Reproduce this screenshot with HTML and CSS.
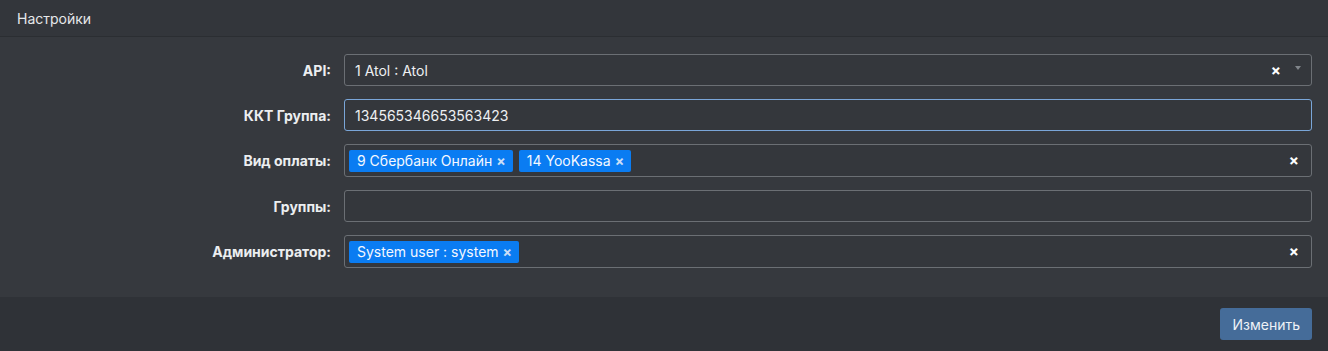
FILE: index.html
```html
<!DOCTYPE html>
<html lang="ru">
<head>
    <meta charset="UTF-8">
    <meta name="viewport" content="width=device-width, initial-scale=1.0">
    <title>Настройки</title>
    <link rel="stylesheet" href="styles.css">
</head>
<body>
    <div class="card">
        <div class="card-header">Настройки</div>

        <div class="card-body">
            <div class="form-row">
                <label class="form-label">API:</label>
                <div class="select single">
                    <span class="select-value">1 Atol : Atol</span>
                    <span class="select-clear">&times;</span>
                    <span class="select-arrow"></span>
                </div>
            </div>

            <div class="form-row">
                <label class="form-label">ККТ Группа:</label>
                <input class="form-input focused" type="text" value="134565346653563423">
            </div>

            <div class="form-row">
                <label class="form-label">Вид оплаты:</label>
                <div class="select multi">
                    <div class="tags">
                        <span class="tag">9 Сбербанк Онлайн <span class="tag-remove">&times;</span></span>
                        <span class="tag">14 YooKassa <span class="tag-remove">&times;</span></span>
                    </div>
                    <span class="select-clear">&times;</span>
                </div>
            </div>

            <div class="form-row">
                <label class="form-label">Группы:</label>
                <input class="form-input" type="text" value="">
            </div>

            <div class="form-row">
                <label class="form-label">Администратор:</label>
                <div class="select multi">
                    <div class="tags">
                        <span class="tag">System user : system <span class="tag-remove">&times;</span></span>
                    </div>
                    <span class="select-clear">&times;</span>
                </div>
            </div>
        </div>

        <div class="card-footer">
            <button class="btn-primary">Изменить</button>
        </div>
    </div>
</body>
</html>
```

FILE: styles.css
```css
* {
    box-sizing: border-box;
    margin: 0;
    padding: 0;
}

body {
    background-color: #2e3136;
    font-family: Inter, 'Liberation Sans', sans-serif;
    color: #e4e6e8;
    width: 1328px;
    height: 351px;
    overflow: hidden;
}

.card {
    background-color: #36393e;
    height: 351px;
    display: flex;
    flex-direction: column;
}

.card-header {
    height: 37px;
    padding: 0 17px;
    display: flex;
    align-items: center;
    font-size: 14px;
    color: #e6e8ea;
    background-color: #33363b;
    border-bottom: 1px solid #2b2e32;
}

.card-body {
    padding: 17px 16px 16px 0;
    display: flex;
    flex-direction: column;
    gap: 13px;
}

.form-row {
    display: grid;
    grid-template-columns: 331px 1fr;
    column-gap: 13px;
    align-items: center;
}

.form-label {
    text-align: right;
    font-size: 14px;
    font-weight: 700;
    color: #eceef0;
}

.form-input,
.select {
    height: 32px;
    width: 100%;
    border: 1px solid #6b6f74;
    border-radius: 3px;
    background-color: #34373c;
    color: #eef0f2;
    font-family: inherit;
    font-size: 14px;
}

.form-input {
    padding: 0 10px;
    outline: none;
}

.form-input.focused {
    border-color: #7aa6d8;
}

.select {
    display: flex;
    align-items: center;
    padding: 0 10px;
}

.select.multi {
    height: 33px;
    padding: 0 12px 0 4px;
}

.select-value {
    flex: 1;
}

.tags {
    flex: 1;
    display: flex;
    gap: 6px;
}

.tag {
    height: 22px;
    display: inline-flex;
    align-items: center;
    padding: 0 7px 0 8px;
    background-color: #0a7cf2;
    border-radius: 2px;
    color: #f4f8ff;
    font-size: 14px;
}

.tag-remove {
    margin-left: 4px;
    font-size: 14px;
    font-weight: 700;
    color: #c9def7;
}

.select-clear {
    font-size: 15px;
    font-weight: 700;
    color: #ffffff;
}

.select-arrow {
    width: 0;
    height: 0;
    margin: 0 0 4px 14px;
    border-left: 3px solid transparent;
    border-right: 3px solid transparent;
    border-top: 4px solid #80858a;
}

.card-footer {
    margin-top: auto;
    height: 54px;
    background-color: #2f3237;
    display: flex;
    justify-content: flex-end;
    align-items: center;
    padding: 0 16px;
}

.btn-primary {
    height: 32px;
    padding: 0 12px;
    border: none;
    border-radius: 3px;
    background-color: #456c99;
    color: #eef2f7;
    font-family: inherit;
    font-size: 14px;
}
```
